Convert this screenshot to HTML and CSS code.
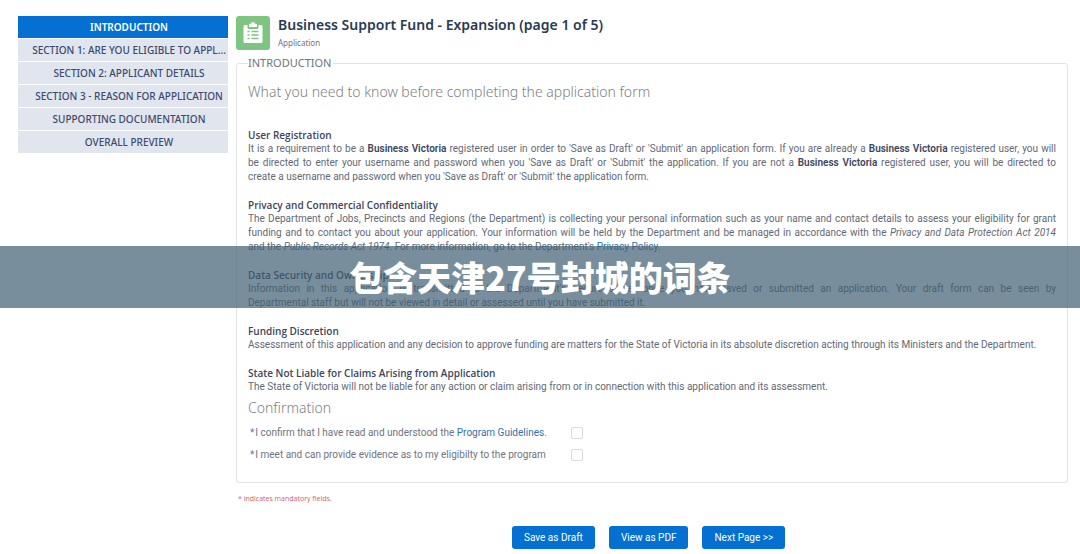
FILE: index.html
```html
<!DOCTYPE html>
<html lang="en">
<head>
<meta charset="utf-8">
<title>Business Support Fund - Expansion</title>
<link rel="stylesheet" href="styles.css">
</head>
<body>
<div class="layout">
  <nav class="steps" aria-label="Form sections">
    <a class="step step-active" href="#introduction" aria-current="step">INTRODUCTION</a>
    <a class="step" href="#section1">SECTION 1: ARE YOU ELIGIBLE TO APPL...</a>
    <a class="step" href="#section2">SECTION 2: APPLICANT DETAILS</a>
    <a class="step" href="#section3">SECTION 3 - REASON FOR APPLICATION</a>
    <a class="step" href="#supporting">SUPPORTING DOCUMENTATION</a>
    <a class="step" href="#preview">OVERALL PREVIEW</a>
  </nav>
  <main class="main">
    <header class="header">
      <svg class="header-icon" viewBox="0 0 34 34" aria-hidden="true">
        <rect width="34" height="34" rx="3" fill="#7fc582"/>
        <path d="M9 9h2.500v2.500q0 1.500 1.500 1.500h8q1.500 0 1.500-1.500V9H25q1.500 0 1.500 1.500v15Q26.500 27 25 27H9q-1.500 0-1.500-1.500v-15Q7.500 9 9 9z" fill="#fff"/>
        <path d="M13 11V8.500q0-.8.800-.8h1.200q.2-1.700 2-1.700t2 1.700h1.200q.8 0 .8.800V11z" fill="#fff"/>
        <path d="M11.500 15.500h2m-2 3.500h2m-2 3.500h2m2-7h7m-7 3.500h7m-7 3.500h7" stroke="#7fc582" stroke-width="1.500" fill="none"/>
      </svg>
      <div>
        <h1 class="title">Business Support Fund - Expansion (page 1 of 5)</h1>
        <p class="subtitle">Application</p>
      </div>
    </header>
    <form class="form">
      <fieldset class="panel" id="introduction">
        <legend class="legend">INTRODUCTION</legend>
        <h2 class="heading">What you need to know before completing the application form</h2>
        <div class="copy">
          <section>
            <h3>User Registration</h3>
            <p>It is a requirement to be a <b>Business Victoria</b> registered user in order to 'Save as Draft' or 'Submit' an application form. If you are already a <b>Business Victoria</b> registered user, you will be&nbsp;directed to enter your username and password when you 'Save as Draft' or 'Submit' the application. If you are not a <b>Business Victoria</b> registered user, you will be directed to create&nbsp;a&nbsp;username and password when you 'Save as Draft' or 'Submit' the application form.</p>
          </section>
          <section>
            <h3>Privacy and Commercial Confidentiality</h3>
            <p>The Department of Jobs, Precincts and Regions (the Department) is collecting your personal information such as your name and contact details to assess your eligibility for grant funding and to contact you about your application. Your information will be held by the Department and be managed in accordance with the <i>Privacy and Data Protection Act 2014</i> and&nbsp;the&nbsp;<i>Public Records Act 1974</i>. For more information, go to the Department's <a href="#privacy">Privacy Policy</a>.</p>
          </section>
          <section>
            <h3>Data Security and Ownership</h3>
            <p>Information in this application is transmitted to the Department's secure server once you have saved or submitted an application. Your draft form can be seen by Departmental&nbsp;staff&nbsp;but will not be viewed in detail or assessed until you have submitted it.</p>
          </section>
          <section>
            <h3>Funding Discretion</h3>
            <p>Assessment of this application and any decision to approve funding are matters for the State of Victoria in its absolute discretion acting through its Ministers and the Department.</p>
          </section>
          <section>
            <h3>State Not Liable for Claims Arising from Application</h3>
            <p>The State of Victoria will not be liable for any action or claim arising from or in connection with this application and its assessment.</p>
          </section>
        </div>
        <h2 class="heading confirm-heading">Confirmation</h2>
        <div class="checks">
          <label for="read">*&hairsp;I confirm that I have read and understood the <a href="#guidelines">Program Guidelines</a>.</label>
          <input id="read" type="checkbox">
          <label for="evidence">*&hairsp;I meet and can provide evidence as to my eligibilty to the program</label>
          <input id="evidence" type="checkbox">
        </div>
      </fieldset>
      <p class="note">* indicates mandatory fields.</p>
      <div class="actions">
        <button type="button">Save as Draft</button>
        <button type="button">View as PDF</button>
        <button type="button">Next Page &gt;&gt;</button>
      </div>
    </form>
  </main>
</div>
<div class="banner" lang="zh">包含天津27号封城的词条</div>
</body>
</html>
```
FILE: styles.css
```css
* { box-sizing: border-box; }
body {
  margin: 0;
  background: #fff;
  color: #636977;
  font: 10px/14px Roboto, "Noto Sans", sans-serif;
}
h1, h2, h3, p { margin: 0; }
a { color: #2f73ad; text-decoration: none; }

.layout { display: flex; gap: 8px; padding: 16px 12px 0 18px; }
.steps { flex: 0 0 210px; min-width: 0; display: flex; flex-direction: column; gap: 1px; }
.step {
  height: 22px;
  padding: 0 2px 0 14px;
  overflow: hidden;
  background: #e1e5ee;
  color: #3c4a70;
  font-family: "Noto Sans", sans-serif;
  font-weight: 500;
  line-height: 22px;
  text-align: center;
  white-space: nowrap;
}
.step-active { background: #0470d2; color: #fff; font-weight: 600; }

.main { flex: 1; min-width: 0; }
.header { display: flex; gap: 8px; }
.header-icon { width: 34px; height: 34px; }
.title { color: #2a3a55; font: 600 14px/18px "Noto Sans", sans-serif; }
.subtitle { margin-top: 2px; color: #70747f; font: 8px/14px "Noto Sans", sans-serif; }

.panel {
  min-width: 0;
  margin: 6px 0 0;
  padding: 12px 11px 20px;
  border: 1px solid #e2e4e6;
  border-radius: 3px;
}
.legend { padding: 0 2px 0 0; color: #70747c; font: 11px/14px "Noto Sans", sans-serif; }
.heading { color: #7c7f86; font: 300 14px/20px "Noto Sans", sans-serif; }
.copy { display: flex; flex-direction: column; gap: 14px; margin-top: 26px; text-align: justify; }
.copy h3 { color: #3c4560; font: 600 10px/14px "Open Sans", sans-serif; }
.copy b { color: #3c4560; font-weight: 600; }
.confirm-heading { margin-top: 4px; }
.checks {
  display: grid;
  grid-template-columns: max-content 12px;
  gap: 8px 24px;
  align-items: center;
  margin-top: 8px;
  padding-left: 2px;
  color: #70747f;
}
.checks input {
  appearance: none;
  width: 12px;
  height: 12px;
  margin: 0;
  border: 1px solid #d8dade;
  border-radius: 2px;
  background: #fff;
}
.note { margin: 9px 2px 0; color: #d4606a; font: 7px/14px "Open Sans", sans-serif; }
.actions { display: flex; gap: 14px; margin: 20px 0 0 276px; }
.actions button {
  height: 23px;
  padding: 0 12px;
  border: 0;
  border-radius: 3px;
  background: #0470d2;
  color: #fff;
  font: inherit;
}

/* Caption strip laid over the form */
.banner {
  position: absolute;
  top: 246px;
  left: 0;
  right: 0;
  height: 62px;
  background: rgba(62, 94, 114, 0.7);
  color: #fff;
  font: 900 34px/62px "Noto Sans CJK SC", sans-serif;
  text-align: center;
}
```
